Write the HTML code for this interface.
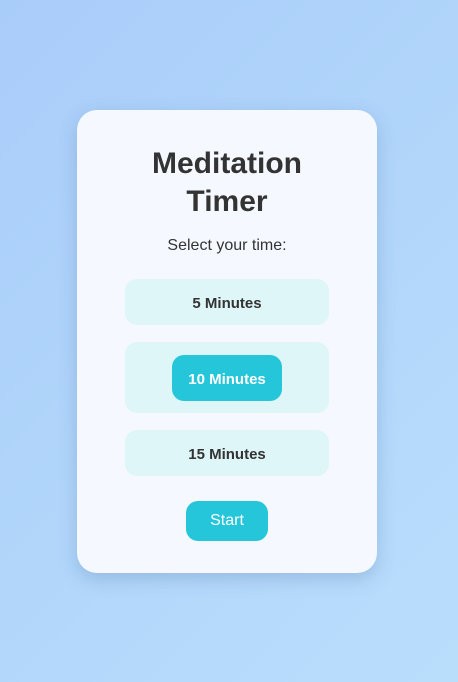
<!DOCTYPE html>
<html><head><style>
*{margin:0;padding:0;box-sizing:border-box}
body{width:458px;height:682px;background:linear-gradient(135deg,#a9cdf9,#b9defc);font-family:"Liberation Sans",sans-serif;position:relative;overflow:hidden}
.card{position:absolute;left:77px;top:110px;width:300px;height:463px;background:#f5f9ff;border-radius:20px;box-shadow:0 6px 18px rgba(80,120,170,.3);text-align:center;color:#333}
h1{position:absolute;left:0;width:300px;top:35px;font-size:30px;line-height:38px;font-weight:bold}
.sel{position:absolute;left:0;width:300px;top:127px;font-size:16px}
.opt{position:absolute;left:48px;width:204px;background:#dff6f8;border-radius:12px;font-weight:bold;font-size:15px;display:flex;align-items:center;justify-content:center;padding-top:3px}
.on{width:110px;height:46px;background:#26c6da;color:#fff;border-radius:12px;display:flex;align-items:center;justify-content:center;margin-top:-3px;padding-top:3px}
.start{position:absolute;left:109px;top:391px;width:82px;height:40px;background:#26c6da;color:#fff;border-radius:12px;font-size:16px;line-height:40px}
</style></head><body>
<div class="card">
<h1>Meditation<br>Timer</h1>
<div class="sel">Select your time:</div>
<div class="opt" style="top:169px;height:46px">5 Minutes</div>
<div class="opt" style="top:232px;height:71px"><div class="on">10 Minutes</div></div>
<div class="opt" style="top:320px;height:46px">15 Minutes</div>
<div class="start">Start</div>
</div>
</body></html>
